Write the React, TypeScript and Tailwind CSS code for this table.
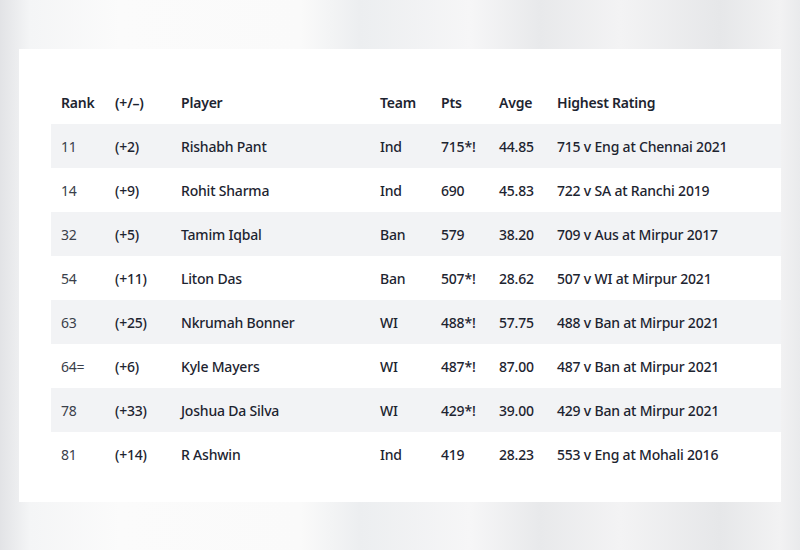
const rows = [
  ["11", "(+2)", "Rishabh Pant", "Ind", "715*!", "44.85", "715 v Eng at Chennai 2021"],
  ["14", "(+9)", "Rohit Sharma", "Ind", "690", "45.83", "722 v SA at Ranchi 2019"],
  ["32", "(+5)", "Tamim Iqbal", "Ban", "579", "38.20", "709 v Aus at Mirpur 2017"],
  ["54", "(+11)", "Liton Das", "Ban", "507*!", "28.62", "507 v WI at Mirpur 2021"],
  ["63", "(+25)", "Nkrumah Bonner", "WI", "488*!", "57.75", "488 v Ban at Mirpur 2021"],
  ["64=", "(+6)", "Kyle Mayers", "WI", "487*!", "87.00", "487 v Ban at Mirpur 2021"],
  ["78", "(+33)", "Joshua Da Silva", "WI", "429*!", "39.00", "429 v Ban at Mirpur 2021"],
  ["81", "(+14)", "R Ashwin", "Ind", "419", "28.23", "553 v Eng at Mohali 2016"],
];

const headers = ["Rank", "(+/\u2013)", "Player", "Team", "Pts", "Avge", "Highest Rating"];

const cols = "grid grid-cols-[54px_66px_199px_61px_58px_58px_1fr] items-center pl-[10px]";

export default function App() {
  return (
    <div
      className="w-[800px] h-[550px] overflow-hidden pt-[49px] pl-[19px] bg-[#f1f2f3] bg-[linear-gradient(90deg,#e2e3e6_0px,#f4f5f6_30px,#fbfbfb_120px,#fafafa_300px,#eceef0_360px,#f6f6f7_470px,#e8e9eb_540px,#f3f3f4_620px,#e6e7e9_720px,#f2f2f3_780px,#e9eaec_800px)]"
      style={{ fontFamily: '"Noto Sans", "Open Sans", sans-serif' }}
    >
      <div className="w-[762px] h-[453px] bg-white pt-[31px] pl-[32px]">
        <div className={`${cols} h-[44px] text-[14px] font-semibold text-[#1d2430] tracking-[-0.2px]`}>
          {headers.map((h) => (
            <div key={h}>{h}</div>
          ))}
        </div>
        {rows.map((r, i) => (
          <div
            key={r[2]}
            className={`${cols} h-[44px] text-[14px] font-medium text-[#1d2430] tracking-[-0.2px] ${i % 2 === 0 ? "bg-[#f2f3f5]" : "bg-white"}`}
          >
            {r.map((c, j) => (
              <div key={j} className={j === 0 ? "font-normal text-[#3a404a]" : ""}>
                {c}
              </div>
            ))}
          </div>
        ))}
      </div>
    </div>
  );
}
